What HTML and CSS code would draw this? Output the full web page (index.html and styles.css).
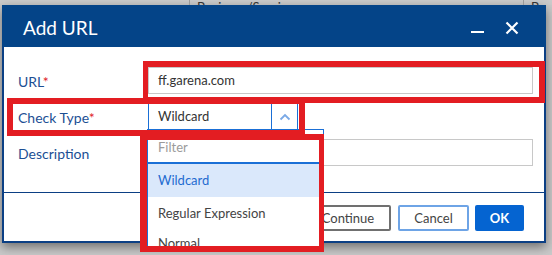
FILE: index.html
```html
<!DOCTYPE html>
<html lang="en">
<head>
    <meta charset="UTF-8">
    <meta name="viewport" content="width=device-width, initial-scale=1.0">
    <title>Add URL</title>
    <link rel="stylesheet" href="styles.css">
</head>
<body>
    <div class="screen">
        <div class="page-head">
            <span class="col col-a"></span>
            <span class="col col-b">Business/Service</span>
            <span class="col col-c">B</span>
        </div>

        <div class="dialog">
            <div class="dialog-head">
                <h1>Add URL</h1>
                <div class="head-actions">
                    <span class="btn-min"></span>
                    <svg class="btn-close" width="14" height="14" viewBox="0 0 14 14">
                        <path d="M1.5 1.5 L12.5 12.5 M12.5 1.5 L1.5 12.5" stroke="#fff" stroke-width="2.2" fill="none"/>
                    </svg>
                </div>
            </div>

            <div class="dialog-body">
                <div class="row">
                    <label>URL<em>*</em></label>
                    <div class="field">ff.garena.com</div>
                </div>
                <div class="row">
                    <label>Check Type<em>*</em></label>
                    <div class="select">
                        <span class="select-value">Wildcard</span>
                        <span class="select-arrow">
                            <svg width="12" height="8" viewBox="0 0 12 8">
                                <path d="M1.5 6.5 L6 2 L10.5 6.5" stroke="#7aa9e6" stroke-width="1.8" fill="none"/>
                            </svg>
                        </span>
                    </div>
                </div>
                <div class="row">
                    <label>Description</label>
                    <div class="field"></div>
                </div>
            </div>

            <div class="dialog-foot">
                <button class="btn btn-continue">Continue</button>
                <button class="btn btn-cancel">Cancel</button>
                <button class="btn btn-ok">OK</button>
            </div>
        </div>

        <!-- open list of the Check Type select -->
        <div class="dropdown">
            <div class="dropdown-filter">Filter</div>
            <div class="option selected">Wildcard</div>
            <div class="option">Regular Expression</div>
            <div class="option">Normal</div>
        </div>

        <!-- red annotation boxes -->
        <div class="mark mark-url"></div>
        <div class="mark mark-type"></div>
        <div class="mark mark-list"></div>
    </div>
</body>
</html>
```

FILE: styles.css
```css
body {
    margin: 0;
    padding: 0;
    font-family: 'Lato', 'Noto Sans', sans-serif;
    background: #c9c9c9;
}

.screen {
    position: relative;
    width: 552px;
    height: 255px;
    overflow: hidden;
    background: #c9c9c9;
}

/* table header of the page behind the modal */
.page-head {
    display: flex;
    height: 5px;
    overflow: hidden;
    background: #cbcbcb;
}

.page-head .col {
    box-sizing: border-box;
    font-size: 13px;
    line-height: 13px;
    color: #333;
    padding: 1px 0 0 7px;
}

.col-a {
    width: 190px;
    border-right: 1px solid #9a9a9a;
}

.col-b {
    width: 334px;
    border-right: 1px solid #9a9a9a;
}

.dialog {
    margin-left: 2px;
    width: 544px;
    box-sizing: border-box;
    border: 2px solid #0b3f84;
    border-top: 0;
    background: #fff;
    box-shadow: 0 4px 10px rgba(0, 0, 0, 0.45);
}

.dialog-head {
    display: flex;
    align-items: center;
    justify-content: space-between;
    height: 42px;
    margin: 0 -2px;
    padding: 0 27px 0 21px;
    background: #044488;
}

.dialog-head h1 {
    margin: 3px 0 0 0;
    font-size: 19px;
    font-weight: 400;
    color: #fff;
}

.head-actions {
    display: flex;
    align-items: center;
    gap: 21px;
    padding-top: 3px;
}

.btn-min {
    display: block;
    width: 13px;
    height: 2px;
    margin-top: 9px;
    background: #fff;
}

.dialog-body {
    padding: 20px 11px 26px 14px;
    display: flex;
    flex-direction: column;
    gap: 9px;
}

.row {
    display: flex;
    align-items: center;
    height: 27px;
}

.row label {
    width: 130px;
    padding-top: 2px;
    font-size: 14px;
    color: #1c4f94;
}

.row label em {
    font-style: normal;
    color: #e0242b;
}

.field {
    flex: 1;
    height: 27px;
    box-sizing: border-box;
    border: 1px solid #c8c8c8;
    padding: 0 9px;
    font-size: 13px;
    line-height: 25px;
    color: #333;
}

.select {
    display: flex;
    width: 150px;
    height: 27px;
    box-sizing: border-box;
    border: 1px solid #1a6fd6;
}

.select-value {
    flex: 1;
    padding-left: 9px;
    font-size: 13px;
    line-height: 25px;
    color: #333;
}

.select-arrow {
    display: flex;
    align-items: center;
    justify-content: center;
    width: 25px;
    border-left: 1px solid #1a6fd6;
}

.dialog-foot {
    display: flex;
    justify-content: flex-end;
    border-top: 1px solid #0b3f84;
    padding: 12px 20px 10px 0;
}

.btn {
    height: 26px;
    box-sizing: border-box;
    font-family: inherit;
    font-size: 13px;
    background: #fff;
    color: #444;
    border-radius: 2px;
    padding: 0;
}

.btn-continue {
    width: 86px;
    border: 2px solid #707070;
}

.btn-cancel {
    width: 71px;
    margin-left: 7px;
    border: 2px solid #6ea4e6;
}

.btn-ok {
    width: 49px;
    margin-left: 6px;
    border: none;
    background: #0564d1;
    color: #fff;
    font-weight: 700;
}

.dropdown {
    position: absolute;
    left: 147px;
    top: 129px;
    width: 177px;
    height: 122px;
    overflow: hidden;
    box-sizing: border-box;
    border: 1px solid #1a6fd6;
    background: #fff;
}

.dropdown-filter {
    height: 34px;
    box-sizing: border-box;
    border-bottom: 2px solid #1a6fd6;
    padding-left: 10px;
    font-size: 13px;
    line-height: 34px;
    color: #9b9b9b;
}

.option {
    height: 33px;
    padding-left: 10px;
    font-size: 13px;
    line-height: 33px;
    color: #444;
}

.option:last-child {
    line-height: 26px;
}

.option.selected {
    background: #dae8fb;
    color: #1f6bd0;
}

.mark {
    position: absolute;
    box-sizing: border-box;
    border: 6px solid #e31d22;
}

.mark-url {
    left: 143px;
    top: 61px;
    width: 402px;
    height: 42px;
    border-left-width: 5px;
}

.mark-type {
    left: 7px;
    top: 98px;
    width: 298px;
    height: 38px;
}

.mark-list {
    left: 140px;
    top: 134px;
    width: 184px;
    height: 118px;
    border-left-width: 7px;
    border-right-width: 5px;
}
```
